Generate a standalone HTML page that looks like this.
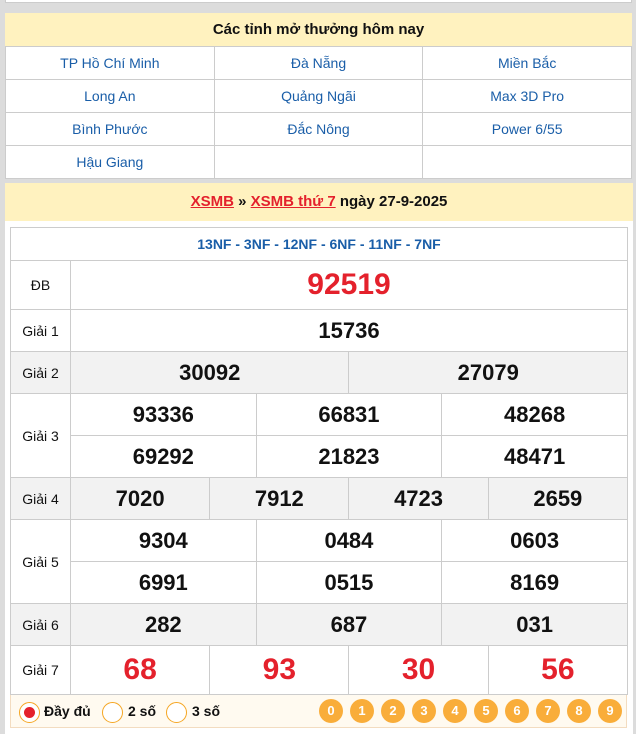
<!DOCTYPE html>
<html><head><meta charset="utf-8"><style>
*{margin:0;padding:0;box-sizing:border-box}
body{width:636px;height:734px;background:#dcdcdc;font-family:"Liberation Sans",Arial,sans-serif;position:relative;overflow:hidden}
.b1{position:absolute;left:5px;top:-10px;width:627px;height:13px;background:#fff;border:1px solid #ccc}
.box1{position:absolute;left:5px;top:13px;width:627px;background:#fff}
.h1{height:33px;background:#fff2bf;text-align:center;font-weight:bold;font-size:15px;line-height:33px;color:#111}
table{border-collapse:collapse;width:100%;table-layout:fixed}
.t1 td{height:33px;border:1px solid #ccc;text-align:center;font-size:14px;color:#1a5ea8}
.box2{position:absolute;left:5px;top:183px;width:628px;height:551px;background:#fff}
.h2{height:38px;background:#fff2bf;text-align:center;font-weight:bold;font-size:15px;line-height:38px;color:#111}
.h2 a{color:#e4212c;text-decoration:underline}
.t2{position:absolute;left:5px;top:44px;width:617px}
.t2 td{border:1px solid #ccc;text-align:center;font-weight:bold;font-size:22px;color:#111}
.t2 td.l{font-weight:normal;font-size:14px}
.g td{background:#f2f2f2}
.red{color:#e4212c!important;font-size:30px!important}
.code td{color:#1a5ea8;font-size:14px;height:33px}
.foot{position:absolute;left:5px;top:512px;width:617px;height:33px;background:#fffaf0;border:1px solid #f3dcc0;border-top:none}
.r{position:absolute;top:7px;width:21px;height:21px;border:1px solid #f5a623;border-radius:50%;background:#fff}
.ft{position:absolute;top:8px;font-weight:bold;font-size:14px;color:#111}
.n{position:absolute;top:4px;width:24px;height:24px;border-radius:50%;background:#f9ad3a;color:#fff;font-weight:bold;font-size:13px;text-align:center;line-height:24px}
</style></head><body>
<div class="b1"></div>
<div class="box1">
<div class="h1">Các tỉnh mở thưởng hôm nay</div>
<table class="t1">
<tr><td>TP Hồ Chí Minh</td><td>Đà Nẵng</td><td>Miền Bắc</td></tr>
<tr><td>Long An</td><td>Quảng Ngãi</td><td>Max 3D Pro</td></tr>
<tr><td>Bình Phước</td><td>Đắc Nông</td><td>Power 6/55</td></tr>
<tr><td>Hậu Giang</td><td></td><td></td></tr>
</table></div>
<div class="box2">
<div class="h2"><a>XSMB</a> » <a>XSMB thứ 7</a> ngày 27-9-2025</div>
<table class="t2">
<colgroup><col style="width:60px"><col span="12" style="width:46.417px"></colgroup>
<tr class="code"><td colspan="13">13NF - 3NF - 12NF - 6NF - 11NF - 7NF</td></tr>
<tr style="height:49px"><td class="l">ĐB</td><td colspan="12" class="red">92519</td></tr>
<tr style="height:42px"><td class="l">Giải 1</td><td colspan="12">15736</td></tr>
<tr style="height:42px" class="g"><td class="l">Giải 2</td><td colspan="6">30092</td><td colspan="6">27079</td></tr>
<tr style="height:42px"><td class="l" rowspan="2">Giải 3</td><td colspan="4">93336</td><td colspan="4">66831</td><td colspan="4">48268</td></tr>
<tr style="height:42px"><td colspan="4">69292</td><td colspan="4">21823</td><td colspan="4">48471</td></tr>
<tr style="height:42px" class="g"><td class="l">Giải 4</td><td colspan="3">7020</td><td colspan="3">7912</td><td colspan="3">4723</td><td colspan="3">2659</td></tr>
<tr style="height:42px"><td class="l" rowspan="2">Giải 5</td><td colspan="4">9304</td><td colspan="4">0484</td><td colspan="4">0603</td></tr>
<tr style="height:42px"><td colspan="4">6991</td><td colspan="4">0515</td><td colspan="4">8169</td></tr>
<tr style="height:42px" class="g"><td class="l">Giải 6</td><td colspan="4">282</td><td colspan="4">687</td><td colspan="4">031</td></tr>
<tr style="height:49px"><td class="l">Giải 7</td><td colspan="3" class="red">68</td><td colspan="3" class="red">93</td><td colspan="3" class="red">30</td><td colspan="3" class="red">56</td></tr>
</table>
<div class="foot">
<div class="r" style="left:8px"><div style="position:absolute;left:4px;top:4px;width:11px;height:11px;border-radius:50%;background:#e4212c"></div></div>
<div class="ft" style="left:33px">Đầy đủ</div>
<div class="r" style="left:91px"></div><div class="ft" style="left:117px">2 số</div>
<div class="r" style="left:155px"></div><div class="ft" style="left:181px">3 số</div>
<div class="n" style="left:308px">0</div><div class="n" style="left:339px">1</div><div class="n" style="left:370px">2</div><div class="n" style="left:401px">3</div><div class="n" style="left:432px">4</div><div class="n" style="left:463px">5</div><div class="n" style="left:494px">6</div><div class="n" style="left:525px">7</div><div class="n" style="left:556px">8</div><div class="n" style="left:587px">9</div>
</div>
</div>
</body></html>
